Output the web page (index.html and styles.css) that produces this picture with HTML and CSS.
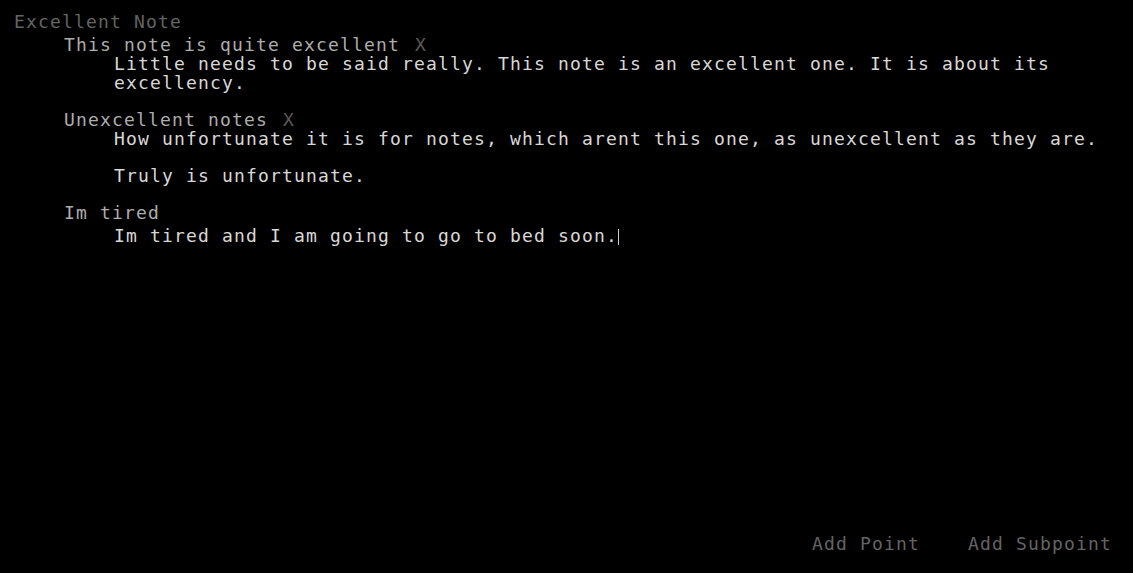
FILE: index.html
```html
<!DOCTYPE html>
<html lang="en">
<head>
<meta charset="utf-8">
<title>Excellent Note</title>
<link rel="stylesheet" href="styles.css">
</head>
<body>
<div class="app">
  <main class="doc">
    <div class="title">Excellent Note</div>
    <section class="point first">
      <div class="point-head"><span class="point-title">This note is quite excellent</span><span class="remove">X</span></div>
      <div class="subpoints">
        <p class="sub">Little needs to be said really. This note is an excellent one. It is about its excellency.</p>
      </div>
    </section>
    <section class="point">
      <div class="point-head"><span class="point-title">Unexcellent notes</span><span class="remove">X</span></div>
      <div class="subpoints">
        <p class="sub">How unfortunate it is for notes, which arent this one, as unexcellent as they are.</p>
        <p class="sub">Truly is unfortunate.</p>
      </div>
    </section>
    <section class="point">
      <div class="point-head"><span class="point-title">Im tired</span></div>
      <div class="subpoints">
        <p class="sub editing">Im tired and I am going to go to bed soon.<span class="caret"></span></p>
      </div>
    </section>
  </main>
  <footer class="actions">
    <span class="action">Add Point</span>
    <span class="action">Add Subpoint</span>
  </footer>
</div>
</body>
</html>
```
FILE: styles.css
```css
html, body {
  margin: 0;
  padding: 0;
  background: #000;
  height: 100%;
}

body {
  font-family: "DejaVu Sans Mono", "Liberation Mono", monospace;
  font-size: 18px;
  line-height: 19px;
  letter-spacing: 1.164px;
  color: #d6d6d6;
}

.app {
  height: 100vh;
  display: flex;
  flex-direction: column;
}

.doc {
  flex: 1;
  padding: 12px 0 0 14px;
}

.title {
  color: #646464;
  white-space: nowrap;
}

.point {
  margin-left: 50px;
}

.point.first {
  margin-top: 4px;
}

.point-head {
  display: flex;
  white-space: nowrap;
}

.point-title {
  color: #adadad;
}

.remove {
  color: #5a5a5a;
  margin-left: 15px;
}

.subpoints {
  margin-left: 50px;
}

.sub {
  margin: 0 0 18px 0;
  color: #d8d8d8;
}

.sub.editing {
  margin-top: 4px;
}

.caret {
  display: inline-block;
  width: 0;
  height: 16px;
  border-left: 1px solid #cfcfcf;
  vertical-align: -3px;
  margin-left: 0;
}

.actions {
  display: flex;
  justify-content: flex-end;
  gap: 48px;
  padding: 0 21px 20px 0;
}

.action {
  color: #646464;
}
```
